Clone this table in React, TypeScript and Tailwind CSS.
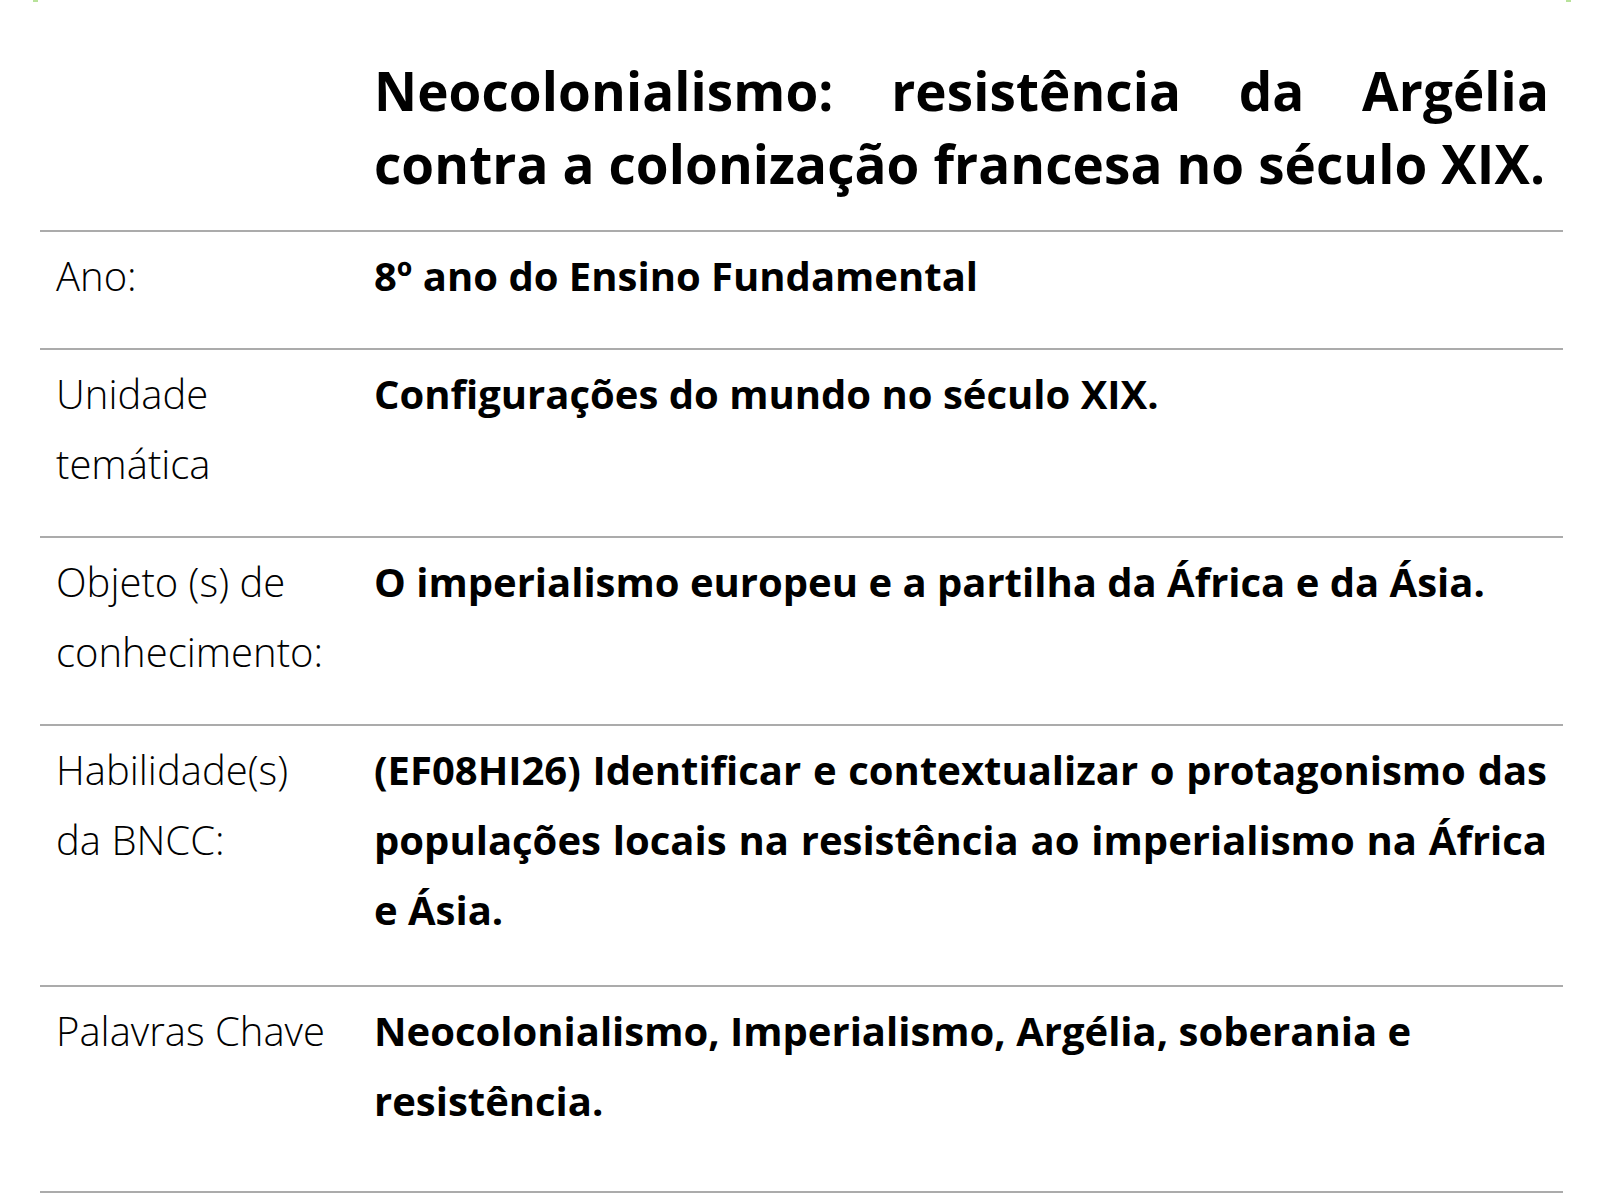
import React from "react";

const rows: { label: string; value: string; pb: string; justify?: boolean }[] = [
  { label: "Ano:", value: "8º ano do Ensino Fundamental", pb: "pb-[37px]" },
  { label: "Unidade temática", value: "Configurações do mundo no século XIX.", pb: "pb-[37px]" },
  {
    label: "Objeto (s) de conhecimento:",
    value: "O imperialismo europeu e a partilha da África e da Ásia.",
    pb: "pb-[37px]",
  },
  {
    label: "Habilidade(s) da BNCC:",
    value:
      "(EF08HI26) Identificar e contextualizar o protagonismo das populações locais na resistência ao imperialismo na África e Ásia.",
    justify: true,
    pb: "pb-[40px]",
  },
  {
    label: "Palavras Chave",
    value:
      "Neocolonialismo, Imperialismo, Argélia, soberania e resistência.",
    pb: "pb-[55px]",
  },
];

export default function App() {
  return (
    <div
      className="relative w-[1600px] min-h-[1200px] bg-white text-black"
      style={{ fontFamily: '"Open Sans", "Noto Sans", sans-serif' }}
    >
      <div className="absolute left-[33px] top-0 h-[2px] w-[5px] bg-[#b8e29a]" />
      <div className="absolute left-[1566px] top-0 h-[2px] w-[5px] bg-[#b8e29a]" />
      <div className="ml-[40px] w-[1523px]">
        <div className="flex border-b-2 border-[#ababab]">
          <div className="w-[334px] shrink-0" />
          <h1 className="flex-1 pr-[14px] pt-[54px] pb-[30px] text-justify text-[53px] font-bold leading-[73px] tracking-[0.1px]">
            Neocolonialismo: resistência da Argélia contra a colonização francesa no século XIX.
          </h1>
        </div>
        {rows.map((r) => (
          <div
            key={r.label}
            className={`flex border-b-2 border-[#ababab] pt-[9px] ${r.pb}`}
          >
            <div className="w-[334px] shrink-0 pl-[16px] pr-[46px] text-[40px] font-light leading-[70px]">
              {r.label}
            </div>
            <div
              className={`flex-1 pr-[16px] text-[40px] font-bold leading-[70px] ${
                r.justify ? "text-justify" : ""
              }`}
            >
              {r.value}
            </div>
          </div>
        ))}
      </div>
    </div>
  );
}
